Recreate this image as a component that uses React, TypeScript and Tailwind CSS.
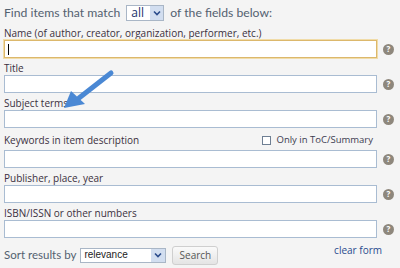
import React from "react";

const fields = [
  { label: "Name (of author, creator, organization, performer, etc.)", active: true },
  { label: "Title" },
  { label: "Subject terms" },
  { label: "Keywords in item description", toc: true },
  { label: "Publisher, place, year" },
  { label: "ISBN/ISSN or other numbers" },
];

const HelpIcon = () => (
  <span className="flex h-[11px] w-[11px] items-center justify-center rounded-full bg-[#8e877c] text-[8px] font-bold leading-none text-white">
    ?
  </span>
);

const Chevron = () => (
  <svg width="8" height="6" viewBox="0 0 8 6">
    <path d="M1 1.5 L4 4.5 L7 1.5" stroke="#2b4c8c" strokeWidth="1.6" fill="none" />
  </svg>
);

const App = () => {
  return (
    <div className="relative h-[268px] w-[400px] overflow-hidden bg-[#f4f4f4] px-[4px] font-['Open_Sans',sans-serif]">
      {/* Heading */}
      <div className="flex h-[26px] items-center gap-[6px] font-['Lato',sans-serif] text-[12.2px] text-[#536170]">
        <span>Find items that match</span>
        <div className="flex h-[16px] w-[38px] items-center border border-[#a9b6c6] bg-white">
          <span className="flex-1 pl-[4px] font-['Open_Sans',sans-serif] text-[12px] leading-none text-[#22326b]">all</span>
          <span className="flex h-full w-[13px] items-center justify-center bg-[#d2def0]">
            <Chevron />
          </span>
        </div>
        <span>of the fields below:</span>
      </div>

      {/* Fields */}
      <div className="flex flex-col">
        {fields.map((f, i) => (
          <div key={i} className="mb-[3px] flex flex-col">
            {f.toc ? (
              <div className="flex h-[19px] items-center justify-between pr-[23px] text-[10px] text-[#3b3040]">
                <span>{f.label}</span>
                <label className="flex items-center gap-[6px] text-[9.5px] text-[#3b3b50]">
                  <span className="h-[9px] w-[9px] border border-[#6e7f93] bg-white" />
                  Only in ToC/Summary
                </label>
              </div>
            ) : (
              <div className="flex h-[14px] items-center text-[10px] text-[#3b3040]">{f.label}</div>
            )}
            <div className="flex items-center gap-[6px]">
              <div
                className={
                  f.active
                    ? "flex h-[18px] w-[373px] items-center border border-[#dcb86c] bg-white pl-[3px] shadow-[0_0_0_1px_#f1dca8]"
                    : "h-[18px] w-[373px] border border-[#a9bcd2] bg-white"
                }
              >
                {f.active && <span className="h-[11px] w-[1px] bg-black" />}
              </div>
              <HelpIcon />
            </div>
          </div>
        ))}
      </div>

      {/* Sort row */}
      <div className="mt-[3px] flex h-[22px] items-center font-['Lato',sans-serif] text-[11.5px] text-[#536170]">
        <span>Sort results by</span>
        <div className="ml-[4px] flex h-[15px] w-[86px] items-center border border-[#a9b6c6] bg-white">
          <span className="flex-1 pl-[3px] font-['Liberation_Sans',sans-serif] text-[10px] leading-none text-[#222]">relevance</span>
          <span className="flex h-full w-[14px] items-center justify-center bg-[#d2def0]">
            <Chevron />
          </span>
        </div>
        <button className="ml-[6px] h-[19px] w-[46px] rounded-[3px] border border-[#cfcfcf] bg-gradient-to-b from-[#fafafa] to-[#e4e4e4] font-['Open_Sans',sans-serif] text-[10px] text-[#555]">
          Search
        </button>
        <a className="ml-auto mb-[10px] mr-[14px] font-['Open_Sans',sans-serif] text-[10px] text-[#2a4a8e]">clear form</a>
      </div>

      {/* Arrow annotation */}
      <svg className="pointer-events-none absolute left-0 top-0" width="400" height="268">
        <line x1="111" y1="73" x2="79" y2="98" stroke="#4a88d4" strokeWidth="5" strokeLinecap="round" />
        <polygon points="64,108 71,91 85,104" fill="#4a88d4" />
      </svg>
    </div>
  );
};

export default App;
